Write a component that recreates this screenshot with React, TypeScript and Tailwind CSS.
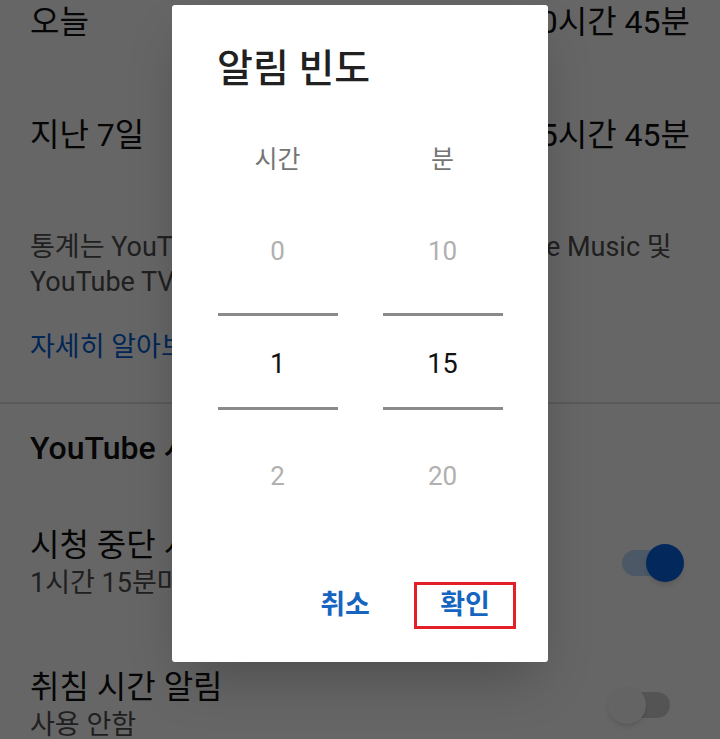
const font = { fontFamily: '"Roboto", "Noto Sans CJK KR", sans-serif' };

// Track stays put, the knob slides across it
const Toggle = ({ on }: { on: boolean }) => (
  <div className="relative h-[38px] w-[76px]">
    <div
      className={
        on
          ? "absolute left-[14px] top-[6px] h-[26px] w-[50px] rounded-full bg-[#bfdcff]"
          : "absolute left-[14px] top-[6px] h-[26px] w-[48px] rounded-full bg-[#d2d2d2]"
      }
    />
    <div
      className={
        on
          ? "absolute left-[38px] top-0 h-[38px] w-[38px] rounded-full bg-[#0665e6] shadow-md"
          : "absolute left-0 top-0 h-[38px] w-[38px] rounded-full bg-[#fafafa] shadow-md"
      }
    />
  </div>
);

const StatRow = ({ label, value }: { label: string; value: string }) => (
  <div className="flex h-[44px] items-center justify-between px-[30px]">
    <span className="text-[32px] text-[#0f0f0f]">{label}</span>
    <span className="text-[32px] text-[#0f0f0f]">{value}</span>
  </div>
);

const SettingRow = ({ title, sub, on }: { title: string; sub: string; on: boolean }) => (
  <div className="flex items-center justify-between pl-[30px] pr-[36px]">
    <div className="flex flex-col">
      <span className="text-[32px] leading-[40px] text-[#0f0f0f]">{title}</span>
      <span className="text-[27px] leading-[36px] text-[#505050]">{sub}</span>
    </div>
    <Toggle on={on} />
  </div>
);

const PickerColumn = ({ label, prev, value, next }: { label: string; prev: string; value: string; next: string }) => (
  <div className="flex w-[120px] flex-col items-center">
    <div className="flex h-[40px] items-center text-[25px] text-[#757575]">{label}</div>
    <div className="mt-[51px] flex h-[40px] items-center text-[26px] text-[#b0b0b0]">{prev}</div>
    <div className="mt-[42px] h-[3px] w-full bg-[#8a8a8a]" />
    <div className="mt-[28px] flex h-[40px] items-center text-[27px] text-[#111]">{value}</div>
    <div className="mt-[23px] h-[3px] w-full bg-[#8a8a8a]" />
    <div className="mt-[46px] flex h-[40px] items-center text-[26px] text-[#b0b0b0]">{next}</div>
  </div>
);

export default function App() {
  return (
    <div className="relative h-[739px] w-[720px] overflow-hidden bg-white" style={font}>
      {/* settings page under the dialog */}
      <div className="flex flex-col">
        <StatRow label="오늘" value="10시간 45분" />
        <div className="mt-[69px]">
          <StatRow label="지난 7일" value="15시간 45분" />
        </div>
        <p className="mt-[73px] whitespace-nowrap px-[30px] text-[27px] leading-[35px] text-[#505050]">
          통계는 YouTube 앱과 YouTube Kids, YouTube Music 및
          <br />
          YouTube TV의 시청 기록을 기반으로 합니다.
        </p>
        <div className="mt-[30px] px-[30px] text-[27px] leading-[35px] text-[#065fd4]">자세히 알아보기</div>
        <div className="mt-[37px] h-[2px] w-full bg-[#e2e2e2]" />
        <div className="mt-[24px] px-[30px] text-[32px] font-medium leading-[40px] text-[#0f0f0f]">
          YouTube 시청 시간 관리 도구
        </div>
        <div className="mt-[57px]">
          <SettingRow title="시청 중단 시간 알림" sub="1시간 15분마다 알림" on />
        </div>
        <div className="mt-[66px]">
          <SettingRow title="취침 시간 알림" sub="사용 안함" on={false} />
        </div>
      </div>

      {/* scrim */}
      <div className="absolute inset-0 bg-black/60" />

      {/* 알림 빈도 dialog */}
      <div className="absolute left-[172px] top-[5px] flex h-[657px] w-[376px] flex-col rounded-[3px] bg-white shadow-2xl">
        <h2 className="mt-[40px] pl-[45px] text-[39px] font-medium leading-[48px] text-[#212121]">알림 빈도</h2>
        <div className="mt-[47px] flex justify-center gap-[45px]">
          <PickerColumn label="시간" prev="0" value="1" next="2" />
          <PickerColumn label="분" prev="10" value="15" next="20" />
        </div>
        <div className="mt-[86px] flex justify-end gap-[18px] pr-[32px]">
          <button className="flex h-[47px] w-[102px] items-center justify-center text-[27px] font-bold text-[#1565c0]">
            취소
          </button>
          <button className="flex h-[47px] w-[102px] items-center justify-center border-[3px] border-[#e3202a] text-[27px] font-bold text-[#1565c0]">
            확인
          </button>
        </div>
      </div>
    </div>
  );
}
